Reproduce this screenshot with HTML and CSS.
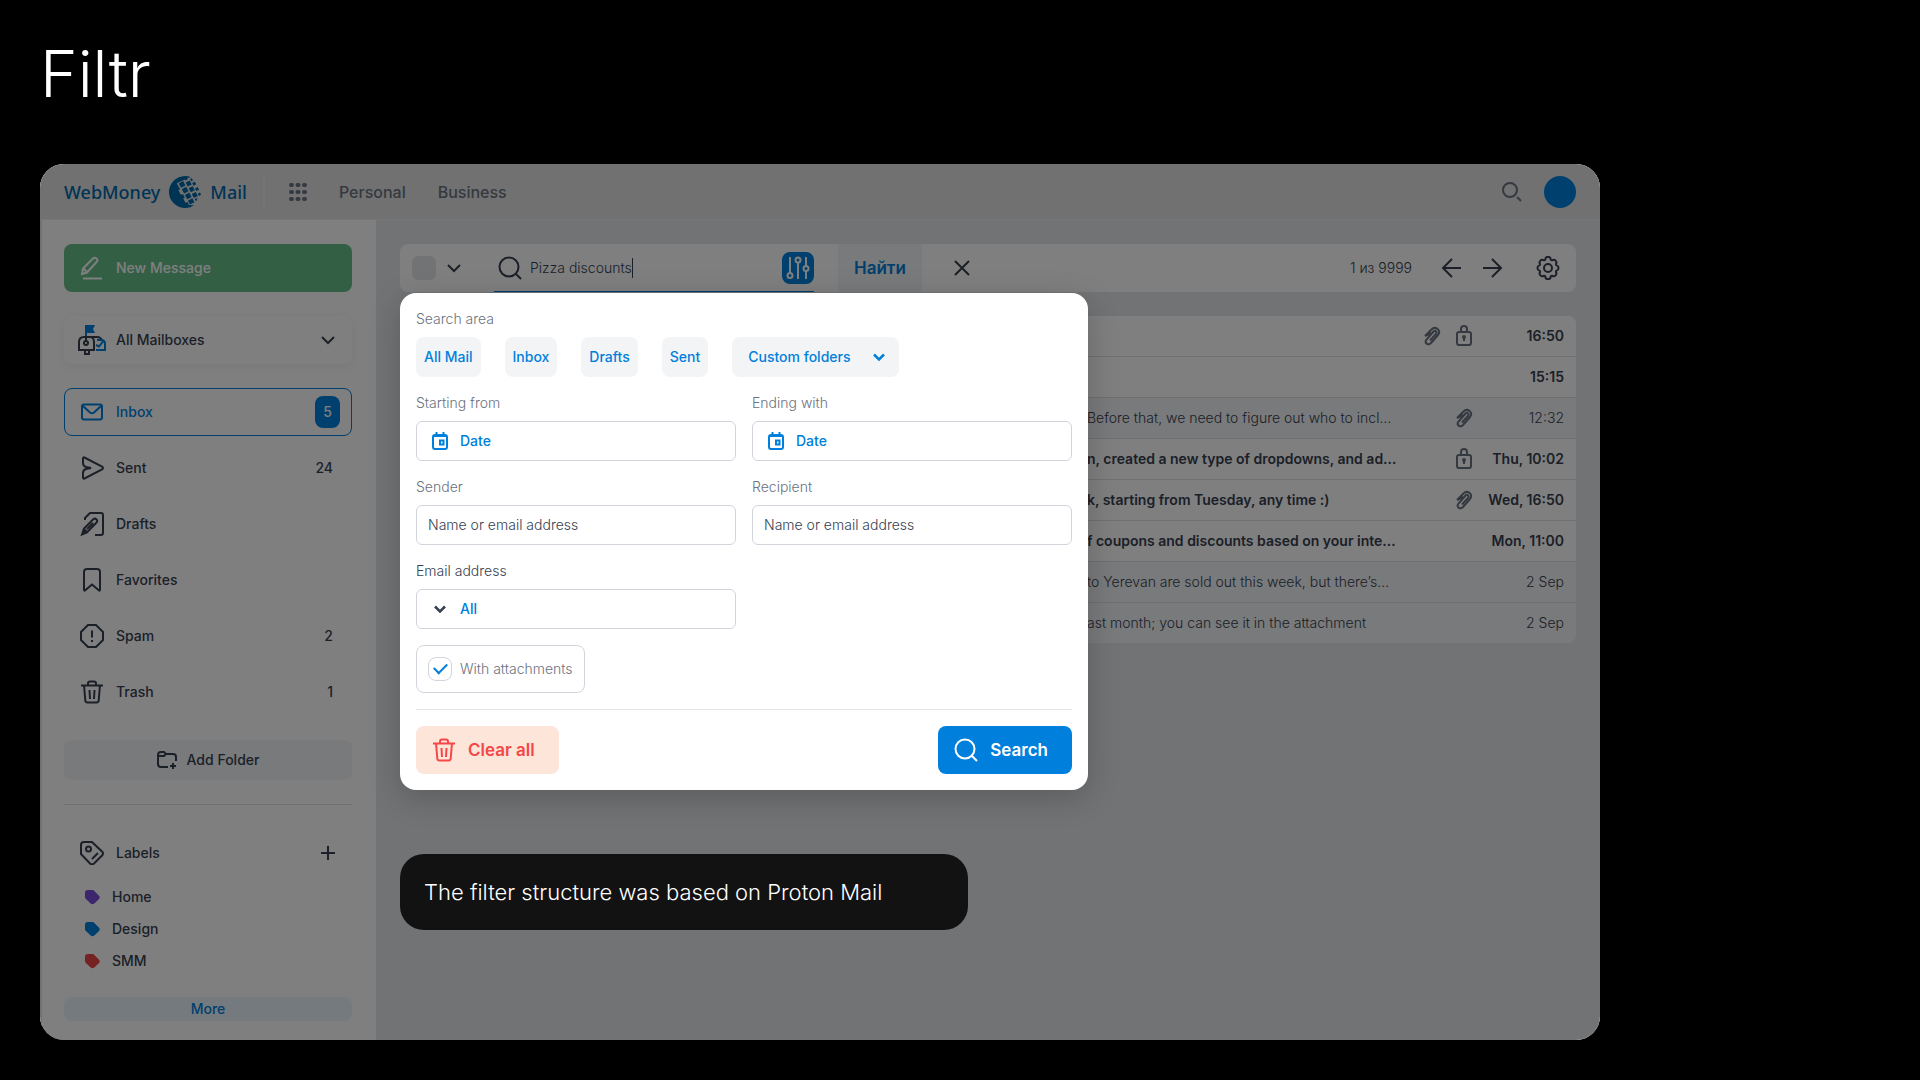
FILE: index.html
```html
<!DOCTYPE html>
<html lang="en">
<head>
<meta charset="utf-8">
<title>Filtr</title>
<meta name="viewport" content="width=device-width, initial-scale=1">
<link rel="stylesheet" href="styles.css">
</head>
<body>
<svg class="sprite" aria-hidden="true">
  <symbol id="chevron" viewBox="0 0 24 24"><path d="M6 9l6 6 6-6"/></symbol>
  <symbol id="magnifier" viewBox="0 0 24 24"><circle cx="11" cy="11" r="9.500"/><path d="M18 18l5 5"/></symbol>
  <symbol id="trash" viewBox="0 0 24 24"><path d="M1 5.500h22M8 5V3.500Q8 1.500 10 1.500h4q2 0 2 2V5M4 5l1.300 15.500q.2 2 2.200 2h9q2 0 2.200-2L20 5M9.500 10l.5 9M14.500 10l-.5 9"/></symbol>
  <symbol id="calendar" viewBox="0 0 16 18"><rect x="1" y="3" width="14" height="14" rx="2"/><path d="M4.500 0v4M11.500 0v4M1 4h14"/><rect x="8" y="8.500" width="3.500" height="4" /></symbol>
  <symbol id="clip" viewBox="0 0 24 24"><path d="M5 12l6.500-6.500c4-4 10 1 6.500 5.500l-7 8c-3 3-7 0-4.500-3.500l7-8c1.500-1.500 4 0 2.500 2.500l-6 6.500M5 12l6-3"/></symbol>
  <symbol id="lock" viewBox="0 0 24 24"><rect x="5" y="8" width="14" height="13" rx="2"/><path d="M9 8V5q0-3 3-3t3 3v3M12 13v4"/><circle cx="12" cy="13" r="1"/></symbol>
  <symbol id="tag" viewBox="0 0 16 16"><path d="M3 0h5q1 0 2 1l5 5q1.500 2 0 3.500l-5 5q-2 1.500-4 0l-5-5Q0 9 0 8V3q0-3 3-3z"/></symbol>
</svg>
<h1 class="title">Filtr</h1>
<div class="app">
  <header class="header">
    <a class="logo" href="#">
      <span>WebMoney</span>
      <svg class="globe" viewBox="0 0 32 32">
        <path d="M22 1.200A16 16 0 1 0 25 29.200L20 29l-1.500-3-2 .8-2.300-4.300 1.600-1-2-3.500-2 .8-2.300-4.600 1.600-1-3.300-6 7-3.200 3.200-2z"/>
        <g transform="rotate(-28 16 16)">
          <path d="M14.500 5.500h5v5h-5zM14.500 12h5v5h-5zM14.500 18.500h5v5h-5zM14.500 25h5v4.500h-5zM21 8h4.500v4.500H21zM21 14.500h4.500V19H21zM21 21h4.500v4.500H21zM21 27h3.500l-3 2.500zM26.500 11.500h3v3h-3zM26.500 17.500h3v3h-3zM26.500 23.500h2.500v2.500h-2.500zM21.500 3h3v3h-3zM26.500 7h2v2.500h-2z"/>
        </g>
      </svg>
      <span>Mail</span>
    </a>
    <nav class="topnav">
      <svg class="apps" viewBox="0 0 18 18" aria-label="Apps"><path d="M2 2h1M8.500 2h1M15 2h1M2 9h1M8.500 9h1M15 9h1M2 16h1M8.500 16h1M15 16h1"/></svg>
      <a href="#">Personal</a>
      <a href="#">Business</a>
    </nav>
    <svg class="find" viewBox="0 0 20 20"><circle cx="8" cy="8" r="7"/><path d="M15 15l4 4"/></svg>
    <span class="avatar"></span>
  </header>
  <div class="columns">
    <aside class="sidebar">
      <button class="compose"><svg class="icon" viewBox="0 0 24 24"><path d="M2 18l1-5.500L13 2.500q1.500-1.500 3.500 0t0 3.500L7 16.500zM3.500 12.500l3.500 3.500M3 22.500h19"/></svg>New Message</button>
      <button class="mailboxes"><svg class="mailbox" viewBox="0 0 28 30"><path d="M1 25V17q0-5 5-5h13q4 0 5 4M16 26V17q0-5-4-5M0 25h17M7 26v3h4v-3M8 9v7"/><circle cx="8" cy="18" r="2"/><path class="flag" d="M7 0h10l-2 4 2 4H9v3H7z"/><path class="blue" d="M19 15h4q4 0 4 4v6h-9M18 20l3 1.500 4-5"/></svg>All Mailboxes<svg class="icon end" ><use href="#chevron"/></svg></button>
      <nav class="folders">
        <a class="active" href="#"><svg class="icon" viewBox="0 0 24 24"><rect x="2" y="4.500" width="20" height="15" rx="2"/><path d="M3 6l7 6.500q2 1.500 4 0L21 6"/></svg>Inbox<b>5</b></a>
        <a href="#"><svg class="icon" viewBox="0 0 24 24"><path d="M3 2.500q0-1.500 1.500-1L22 10.500q2 1.500 0 3L4.500 22.500Q3 23 3 21.500V17q0-3 3-4l5-1-5-1Q3 10 3 7z"/></svg>Sent<i>24</i></a>
        <a href="#"><svg class="icon" viewBox="0 0 24 24"><path d="M5 8V6l5-5h11q2 0 2 2v18q0 2-2 2h-6M2 22.500l2-6L13.500 7q1.500-1 3 .5t0 3L7 20.500zM7 17l6-6"/><circle cx="5" cy="19" r="1"/></svg>Drafts</a>
        <a href="#"><svg class="icon" viewBox="0 0 24 24"><path d="M4 21.500V4q0-3 3-3h10q3 0 3 3v17.500q0 2-1.500.5L12 16.500 5.500 22Q4 23.500 4 21.500z"/></svg>Favorites</a>
        <a href="#"><svg class="icon" viewBox="0 0 24 24"><path d="M8 1h8l7 7v8l-7 7H8l-7-7V8zM12 6.500v7M12 16v2"/></svg>Spam<i>2</i></a>
        <a href="#"><svg class="icon"><use href="#trash"/></svg>Trash<i>1</i></a>
      </nav>
      <button class="add"><svg class="folder" viewBox="0 0 20 18"><path d="M11 16H4q-3 0-3-3V4q0-3 3-3h3l2 2h7q3 0 3 3v4M1 5h6l2-2M16 12v6M13 15h6"/></svg>Add Folder</button>
      <section class="labels">
        <h2><svg class="icon" viewBox="0 0 24 24"><path d="M1 4q0-3 3-3h8l10.500 10q1 1.500 0 3L14 22.500q-2 1.500-4 0L1 13zM12 18l6-6"/><circle cx="8.500" cy="8" r="2.500"/></svg>Labels<svg class="icon end" viewBox="0 0 24 24"><path d="M12 5v14M5 12h14"/></svg></h2>
        <a href="#"><svg class="tag violet"><use href="#tag"/></svg>Home</a>
        <a href="#"><svg class="tag azure"><use href="#tag"/></svg>Design</a>
        <a href="#"><svg class="tag red"><use href="#tag"/></svg>SMM</a>
      </section>
      <button class="more">More</button>
    </aside>
    <main class="main">
      <form class="toolbar">
        <input class="select-all" type="checkbox" aria-label="Select all">
        <svg class="icon pick"><use href="#chevron"/></svg>
        <div class="query">
          <svg class="icon"><use href="#magnifier"/></svg>
          <input type="text" value="Pizza discounts" aria-label="Search mail"><span class="caret"></span>
          <button class="tune" type="button" aria-label="Filter"><svg class="icon" viewBox="0 0 24 24"><path d="M4 1v16M12 7v16M20 1v9M20 15v8"/><circle cx="4" cy="19.500" r="2.500"/><circle cx="12" cy="4" r="2.500"/><circle cx="20" cy="12.500" r="2.500"/></svg></button>
        </div>
        <button class="go" type="button">Найти</button>
        <button class="clear" type="button" aria-label="Close"><svg class="icon" viewBox="0 0 24 24"><path d="M5 5l14 14M19 5L5 19"/></svg></button>
        <span class="count">1 из 9999</span>
        <svg class="icon prev" viewBox="0 0 24 24"><path d="M21 12H3M12 3l-9 9 9 9"/></svg>
        <svg class="icon next" viewBox="0 0 24 24"><path d="M3 12h18M12 3l9 9-9 9"/></svg>
        <svg class="icon gear" viewBox="0 0 24 24"><path d="M9.300 3.500a2.700 2.700 0 0 1 5.400 0 1.500 1.500 0 0 0 1.600.7 2.700 2.700 0 0 1 3.700 3.700 1.500 1.500 0 0 0 .6 1.500 2.700 2.700 0 0 1 0 5.200 1.500 1.500 0 0 0-.6 1.500 2.700 2.700 0 0 1-3.700 3.700 1.500 1.500 0 0 0-1.600.7 2.700 2.700 0 0 1-5.400 0 1.500 1.500 0 0 0-1.600-.7A2.700 2.700 0 0 1 4 16.100a1.500 1.500 0 0 0-.6-1.500 2.700 2.700 0 0 1 0-5.200A1.500 1.500 0 0 0 4 7.900a2.700 2.700 0 0 1 3.700-3.700 1.500 1.500 0 0 0 1.600-.7z"/><circle cx="12" cy="12" r="4"/></svg>
        <div class="popup">
          <fieldset class="area">
            <legend>Search area</legend>
            <div class="chips">
              <button type="button">All Mail</button>
              <button type="button">Inbox</button>
              <button type="button">Drafts</button>
              <button type="button">Sent</button>
              <span class="chip-select"><select aria-label="Custom folders"><option>Custom folders</option></select><svg class="small"><use href="#chevron"/></svg></span>
            </div>
          </fieldset>
          <div class="fields">
            <label>Starting from<span class="field date"><svg class="cal"><use href="#calendar"/></svg><input type="text" placeholder="Date"></span></label>
            <label>Ending with<span class="field date"><svg class="cal"><use href="#calendar"/></svg><input type="text" placeholder="Date"></span></label>
            <label>Sender<span class="field"><input type="text" placeholder="Name or email address"></span></label>
            <label>Recipient<span class="field"><input type="text" placeholder="Name or email address"></span></label>
            <label class="strong">Email address<span class="field pick-one"><svg class="small"><use href="#chevron"/></svg><select><option>All</option></select></span></label>
          </div>
          <label class="attach"><input type="checkbox" checked>With attachments</label>
          <div class="actions">
            <button class="reset" type="reset"><svg class="icon"><use href="#trash"/></svg>Clear all</button>
            <button class="submit" type="button"><svg class="icon"><use href="#magnifier"/></svg>Search</button>
          </div>
        </div>
      </form>
      <table class="mails">
        <colgroup><col class="c-from"><col><col class="c-icons"><col class="c-date"></colgroup>
        <tr class="new"><td></td><td></td><td><svg class="mark"><use href="#clip"/></svg><svg class="mark"><use href="#lock"/></svg></td><td>16:50</td></tr>
        <tr class="new"><td></td><td></td><td></td><td>15:15</td></tr>
        <tr><td></td><td>Before that, we need to figure out who to incl…</td><td><svg class="mark"><use href="#clip"/></svg></td><td>12:32</td></tr>
        <tr class="new"><td></td><td>n, created a new type of dropdowns, and ad…</td><td><svg class="mark"><use href="#lock"/></svg></td><td>Thu, 10:02</td></tr>
        <tr class="new"><td></td><td>k, starting from Tuesday, any time :)</td><td><svg class="mark"><use href="#clip"/></svg></td><td>Wed, 16:50</td></tr>
        <tr class="new"><td></td><td>f coupons and discounts based on your inte…</td><td></td><td>Mon, 11:00</td></tr>
        <tr><td></td><td>to Yerevan are sold out this week, but there’s…</td><td></td><td>2 Sep</td></tr>
        <tr><td></td><td>ast month; you can see it in the attachment</td><td></td><td>2 Sep</td></tr>
      </table>
      <p class="caption">The filter structure was based on Proton Mail</p>
    </main>
  </div>
  <div class="scrim"></div>
</div>
</body>
</html>
```
FILE: styles.css
```css
:root {
  --blue: #0080dc;
  --ink: #374151;
  --muted: #6b7280;
  --line: #d1d5db;
  --soft: #f3f4f6;
  --ground: #e5e7eb;
}

* { box-sizing: border-box; }

body {
  margin: 0;
  padding: 32px 40px 40px;
  background: #000;
  color: var(--ink);
  font: 500 14px/20px Inter, sans-serif;
}

button, input, select {
  margin: 0;
  padding: 0;
  border: 0;
  background: none;
  color: inherit;
  font: inherit;
}

input, select { appearance: none; outline: 0; min-width: 0; }
a { color: inherit; text-decoration: none; }

svg {
  flex: none;
  fill: none;
  stroke: currentColor;
  stroke-width: 2;
}

.sprite { position: absolute; width: 0; height: 0; }
.icon { width: 24px; height: 24px; }
.small { width: 20px; height: 20px; stroke-width: 3; }

.title {
  margin: 0 0 48px;
  color: #fff;
  font-size: 64px;
  line-height: 84px;
  font-weight: 300;
}

.app {
  position: relative;
  max-width: 1560px;
  border-radius: 24px;
  background: #fff;
  overflow: hidden;
}

.scrim {
  position: absolute;
  inset: 0;
  z-index: 1;
  background: rgb(0 0 0 / .5);
}

.header {
  display: flex;
  align-items: center;
  height: 56px;
  padding: 0 24px;
  border-bottom: 1px solid #ececee;
  background: #e2e2e2;
  color: var(--muted);
  font-size: 16px;
}

.logo {
  display: flex;
  align-items: center;
  gap: 9px;
  height: 32px;
  padding-right: 16px;
  border-right: 2px solid #e8e8e8;
  color: #0068ab;
  font: 500 18px/32px "Noto Sans", sans-serif;
}

.globe { width: 32px; height: 32px; fill: currentColor; stroke: none; }
.topnav { display: flex; align-items: center; gap: 32px; margin: 0 auto 0 24px; }
.apps { width: 18px; height: 18px; stroke-width: 4; stroke-linecap: round; }
.find { width: 20px; height: 20px; margin-right: 22px; stroke-width: 2; }
.avatar { width: 32px; height: 32px; border-radius: 50%; background: var(--blue); }

.columns { display: flex; }

.sidebar {
  display: flex;
  flex-direction: column;
  flex: none;
  width: 336px;
  padding: 24px 24px 19px 22px;
  border-left: 2px solid #e2e2e2;
}

.compose, .mailboxes, .folders a {
  display: flex;
  align-items: center;
  gap: 12px;
  height: 48px;
  padding: 0 16px;
  border-radius: 8px;
}

.compose { margin-bottom: 24px; background: #66be8a; color: #fff; }
.mailboxes { margin-bottom: 24px; gap: 10px; padding-left: 14px; box-shadow: 0 2px 12px rgb(0 0 0 / .07); }
.mailbox { width: 28px; height: 30px; }
.flag { fill: var(--blue); stroke: none; }
.blue { stroke: var(--blue); }
.end { margin-left: auto; margin-right: -4px; }

.folders { display: flex; flex-direction: column; gap: 8px; margin-bottom: 24px; }
.folders .active { padding: 0 11px 0 15px; border: 1px solid var(--blue); color: var(--blue); }
.folders i, .folders b { margin-left: auto; font-style: normal; }
.folders i { padding-right: 3px; }
.folders b { padding: 6px 8px; border-radius: 8px; background: var(--blue); color: #fff; font-weight: 500; }

.add, .more {
  display: flex;
  align-items: center;
  justify-content: center;
  gap: 10px;
  height: 40px;
  border-radius: 8px;
  background: var(--soft);
}

.folder { width: 20px; height: 18px; }
.labels { margin: 24px 0 20px; padding-top: 24px; border-top: 1px solid #e0e1e4; }
.labels h2 { display: flex; align-items: center; gap: 12px; height: 48px; margin: 0 0 4px; padding: 0 16px; font: inherit; }
.labels a { display: flex; align-items: center; gap: 12px; height: 32px; padding-left: 21px; }
.tag { width: 15px; height: 15px; fill: currentColor; stroke: none; }
.violet { color: #7b4fd8; }
.azure { color: var(--blue); }
.red { color: #ef4444; }
.more { height: 24px; background: #eaf4fc; color: var(--blue); }

.main {
  position: relative;
  flex: 1;
  min-width: 0;
  padding: 24px;
  background: var(--ground);
}

.toolbar {
  position: relative;
  display: flex;
  align-items: center;
  height: 48px;
  margin-bottom: 24px;
  padding: 0 16px 0 12px;
  border-radius: 8px;
  background: #fff;
  font-weight: 300;
}

.select-all { width: 24px; height: 24px; border-radius: 6px; background: var(--ground); }
.pick { margin: 0 28px 0 6px; }

.query {
  display: flex;
  align-items: center;
  width: 320px;
  height: 48px;
  padding-left: 4px;
  border-bottom: 1px solid var(--blue);
}

.query input { field-sizing: content; margin-left: 8px; }
.caret { width: 1px; height: 20px; background: var(--ink); }
.query .tune { display: flex; align-items: center; justify-content: center; width: 32px; height: 32px; margin-left: auto; border-radius: 8px; background: var(--blue); color: #fff; }
.go { height: 48px; margin-left: 24px; padding: 0 16px; background: var(--soft); color: var(--blue); font-size: 17px; font-weight: 600; }
.clear { display: flex; margin-left: 28px; }
.count { margin-left: auto; }
.prev { margin: 0 16px 0 28px; }
.next { margin-right: 32px; }

.mails {
  width: 100%;
  table-layout: fixed;
  border-spacing: 0;
  border-radius: 8px;
  overflow: hidden;
  background: var(--soft);
  font-weight: 300;
}

.c-from { width: 687px; }
.c-icons { width: 64px; }
.c-date { width: 100px; }
.mails td { height: 41px; padding: 0; border-bottom: 1px solid #dcdee2; white-space: nowrap; }
.mails tr:last-child td { height: 40px; border-bottom: 0; }
.mails td:nth-child(n+3) { text-align: right; }
.mails td:last-child { padding-right: 12px; }
.new { background: #fff; font-weight: 600; }
.mark { width: 24px; height: 24px; margin-left: 8px; color: var(--muted); vertical-align: middle; }

.popup {
  position: absolute;
  top: 49px;
  left: 0;
  z-index: 2;
  display: grid;
  gap: 16px;
  width: 688px;
  padding: 16px;
  border-radius: 16px;
  background: #fff;
  box-shadow: 0 8px 32px rgb(0 0 0 / .2);
  color: var(--muted);
}

.area { min-width: 0; margin: 0; padding: 0; border: 0; }
.area legend { padding: 0; }
.chips { display: flex; gap: 24px; padding-top: 8px; }
.chips button, .chip-select { height: 40px; padding: 0 8px; border-radius: 8px; background: var(--soft); color: var(--blue); font-weight: 500; }
.chips .chip-select { display: flex; align-items: center; gap: 18px; padding: 0 10px 0 16px; }

.fields { display: grid; grid-template-columns: 1fr 1fr; gap: 16px; }
.fields label { display: grid; gap: 8px; }
.fields .strong { color: var(--ink); }
.field { display: flex; align-items: center; gap: 12px; height: 40px; padding: 0 11px; border: 1px solid var(--line); border-radius: 6px; color: var(--ink); }
.field.date { padding-left: 15px; }
.field.pick-one { gap: 10px; padding-left: 13px; }
.field input, .field select { flex: 1; }
.field ::placeholder { color: inherit; opacity: 1; }
.date input, .pick-one select { color: var(--blue); font-weight: 500; }
.cal { width: 16px; height: 18px; color: var(--blue); }

.attach { display: flex; align-items: center; justify-self: start; gap: 8px; height: 48px; padding: 0 11px; border: 1px solid var(--line); border-radius: 8px; }
.attach input { display: grid; place-items: center; width: 24px; height: 24px; border: 1px solid var(--line); border-radius: 8px; }
.attach input:checked::before { content: ""; width: 11px; height: 6px; margin-bottom: 4px; border: solid var(--blue); border-width: 0 0 2px 2px; rotate: -45deg; }

.actions { display: flex; justify-content: space-between; padding-top: 16px; border-top: 1px solid #e3e4e7; }
.actions button { display: flex; align-items: center; gap: 12px; height: 48px; padding: 0 24px 0 16px; border-radius: 8px; font-size: 17px; font-weight: 600; }
.actions .reset { background: #fee5da; color: #f54747; }
.actions .submit { background: var(--blue); color: #fff; }

.caption {
  position: absolute;
  bottom: 110px;
  left: 24px;
  z-index: 2;
  width: 568px;
  margin: 0;
  padding: 24px;
  border-radius: 24px;
  background: #121212;
  color: #fff;
  font-size: 22px;
  line-height: 28px;
  font-weight: 300;
}
```
